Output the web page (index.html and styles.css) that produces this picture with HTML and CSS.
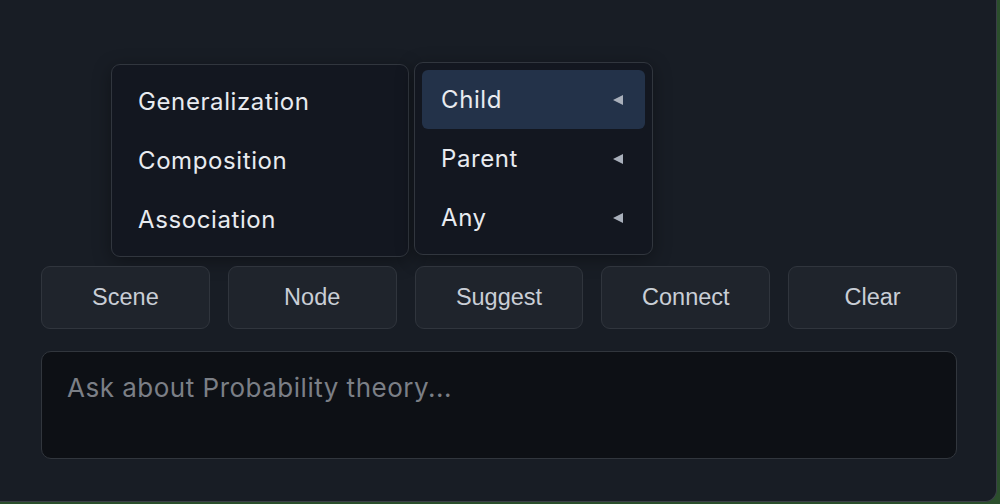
FILE: index.html
```html
<!DOCTYPE html>
<html lang="en">
  <head>
    <meta charset="UTF-8" />
    <title>Relation Picker</title>
    <link rel="stylesheet" href="styles.css">
  </head>
  <body>
    <div class="panel">
      <div class="menus">
        <ul class="menu menu-types">
          <li class="menu-item">Generalization</li>
          <li class="menu-item">Composition</li>
          <li class="menu-item">Association</li>
        </ul>
        <ul class="menu menu-roles">
          <li class="menu-item active">Child <span class="arrow"></span></li>
          <li class="menu-item">Parent <span class="arrow"></span></li>
          <li class="menu-item">Any <span class="arrow"></span></li>
        </ul>
      </div>

      <div class="actions">
        <button class="action">Scene</button>
        <button class="action">Node</button>
        <button class="action">Suggest</button>
        <button class="action">Connect</button>
        <button class="action">Clear</button>
      </div>

      <textarea class="prompt" placeholder="Ask about Probability theory..."></textarea>
    </div>
  </body>
</html>
```

FILE: styles.css
```css
body {
  margin: 0;
  background-color: #2b4f2c;
  font-family: Inter, "Noto Sans", sans-serif;
}
.panel {
  width: 997px;
  height: 502px;
  box-sizing: border-box;
  background-color: #181d25;
  border-right: 1px solid #3a3f47;
  border-bottom: 1px solid #3a3f47;
  border-bottom-right-radius: 12px;
  padding: 62px 39px 0 41px;
}
.menus {
  display: flex;
  align-items: flex-start;
  gap: 5px;
  margin-left: 70px;
}
.menu {
  list-style: none;
  margin: 0;
  padding: 7px;
  background-color: #131720;
  border: 1px solid #31363e;
  border-radius: 9px;
  box-shadow: 0 4px 18px rgba(0, 0, 0, 0.35);
}
.menu-types {
  width: 298px;
  box-sizing: border-box;
  margin-top: 2px;
}
.menu-roles {
  width: 239px;
  box-sizing: border-box;
}
.menu-item {
  display: flex;
  align-items: center;
  justify-content: space-between;
  height: 59px;
  padding: 0 22px 0 19px;
  font-size: 24px;
  letter-spacing: 0.6px;
  color: #e8ebf0;
  border-radius: 6px;
}
.menu-item.active {
  background-color: #233249;
}
.arrow {
  width: 0;
  height: 0;
  border-top: 5.5px solid transparent;
  border-bottom: 5.5px solid transparent;
  border-right: 10px solid #a9b0bb;
}
.actions {
  display: grid;
  grid-template-columns: repeat(5, 1fr);
  gap: 18px;
  margin-top: 9px;
}
.action {
  height: 63px;
  background-color: #1f242c;
  border: 1px solid #30353d;
  border-radius: 9px;
  color: #c9ced6;
  font-family: "Liberation Sans", Arial, sans-serif;
  font-size: 23.5px;
}
.prompt {
  display: block;
  width: 100%;
  height: 108px;
  box-sizing: border-box;
  margin-top: 22px;
  padding: 20px 25px;
  background-color: #0d1015;
  border: 1px solid #31363d;
  border-radius: 10px;
  resize: none;
  outline: none;
  color: #e8ebf0;
  font-family: Inter, "Noto Sans", sans-serif;
  font-size: 26px;
  letter-spacing: 0.5px;
}
.prompt::placeholder {
  color: #7b7f86;
}
```
